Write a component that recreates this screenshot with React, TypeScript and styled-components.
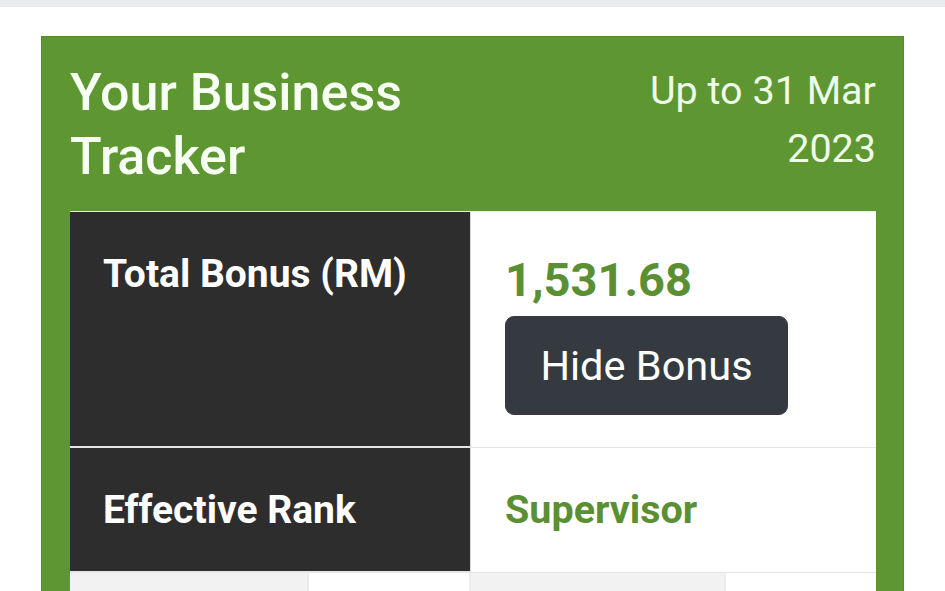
import React from "react";
import styled, { createGlobalStyle } from "styled-components";

const GlobalStyle = createGlobalStyle`
  html, body { margin: 0; padding: 0; background: #ffffff; }
  body { font-family: Roboto, "Liberation Sans", Arial, sans-serif; overflow: hidden; }
  * { box-sizing: border-box; }
`;

const TopStrip = styled.div`
  height: 7px;
  background: #e8ecef;
`;

const Page = styled.div`
  padding: 29px 41px 0 41px;
`;

const Card = styled.section`
  background: #5e9632;
  border: 1px solid #57892f;
  border-bottom: none;
  padding: 0 27px 0 28px;
`;

const Header = styled.header`
  display: flex;
  justify-content: space-between;
  align-items: flex-start;
  padding: 24px 0 22px 0;
`;

const Title = styled.h1`
  margin: 0;
  font-size: 52px;
  font-weight: 500;
  line-height: 64px;
  color: #f6fff2;
  width: 370px;
`;

const DateText = styled.div`
  font-size: 39.5px;
  font-weight: 400;
  line-height: 58px;
  color: #eefbe8;
  text-align: right;
  width: 250px;
  padding-top: 1px;
`;

const Table = styled.div`
  background: #ffffff;
  border-top: 1px solid #e6f2dd;
`;

const Row = styled.div`
  display: grid;
  grid-template-columns: 401px 1fr;
`;

const LabelCell = styled.div<{ $center?: boolean }>`
  background: #2d2d2d;
  color: #ffffff;
  font-weight: 700;
  font-size: 39px;
  line-height: 60px;
  padding: ${(p) => (p.$center ? "32px 20px 30px 33px" : "32px 20px 20px 33px")};
  border-bottom: 2px solid #e4e6e8;
  border-right: 1px solid #d8dadc;
`;

const ValueCell = styled.div`
  padding: 32px 20px 32px 34px;
  border-bottom: 1px solid #e2e5e8;
`;

const Amount = styled.div`
  color: #5b8f34;
  font-weight: 700;
  font-size: 47px;
  line-height: 72px;
`;

const RankValue = styled.div`
  color: #5b8f34;
  font-weight: 700;
  font-size: 39.5px;
  line-height: 60px;
`;

const Button = styled.button`
  display: inline-block;
  background: #343a40;
  color: #ffffff;
  border: 1px solid #343a40;
  border-radius: 9px;
  font-family: Roboto, "Liberation Sans", Arial, sans-serif;
  font-size: 41.5px;
  font-weight: 400;
  line-height: 60px;
  padding: 18px 20px;
  width: 283px;
  height: 99px;
  cursor: pointer;
`;

const SubRow = styled.div`
  display: grid;
  grid-template-columns: 239px 162px 255px 1fr;
  height: 40px;
`;

const SubCell = styled.div<{ $shade?: boolean }>`
  background: ${(p) => (p.$shade ? "#f2f2f2" : "#ffffff")};
  border-right: 2px solid #e9ebed;
  &:last-child { border-right: none; }
`;

export default function App() {
  return (
    <>
      <GlobalStyle />
      <TopStrip />
      <Page>
        <Card>
          <Header>
            <Title>Your Business Tracker</Title>
            <DateText>Up to 31 Mar 2023</DateText>
          </Header>
          <Table>
            <Row>
              <LabelCell>Total Bonus (RM)</LabelCell>
              <ValueCell>
                <Amount>1,531.68</Amount>
                <Button>Hide Bonus</Button>
              </ValueCell>
            </Row>
            <Row>
              <LabelCell $center>Effective Rank</LabelCell>
              <ValueCell>
                <RankValue>Supervisor</RankValue>
              </ValueCell>
            </Row>
            <SubRow>
              <SubCell $shade />
              <SubCell />
              <SubCell $shade />
              <SubCell />
            </SubRow>
          </Table>
        </Card>
      </Page>
    </>
  );
}
